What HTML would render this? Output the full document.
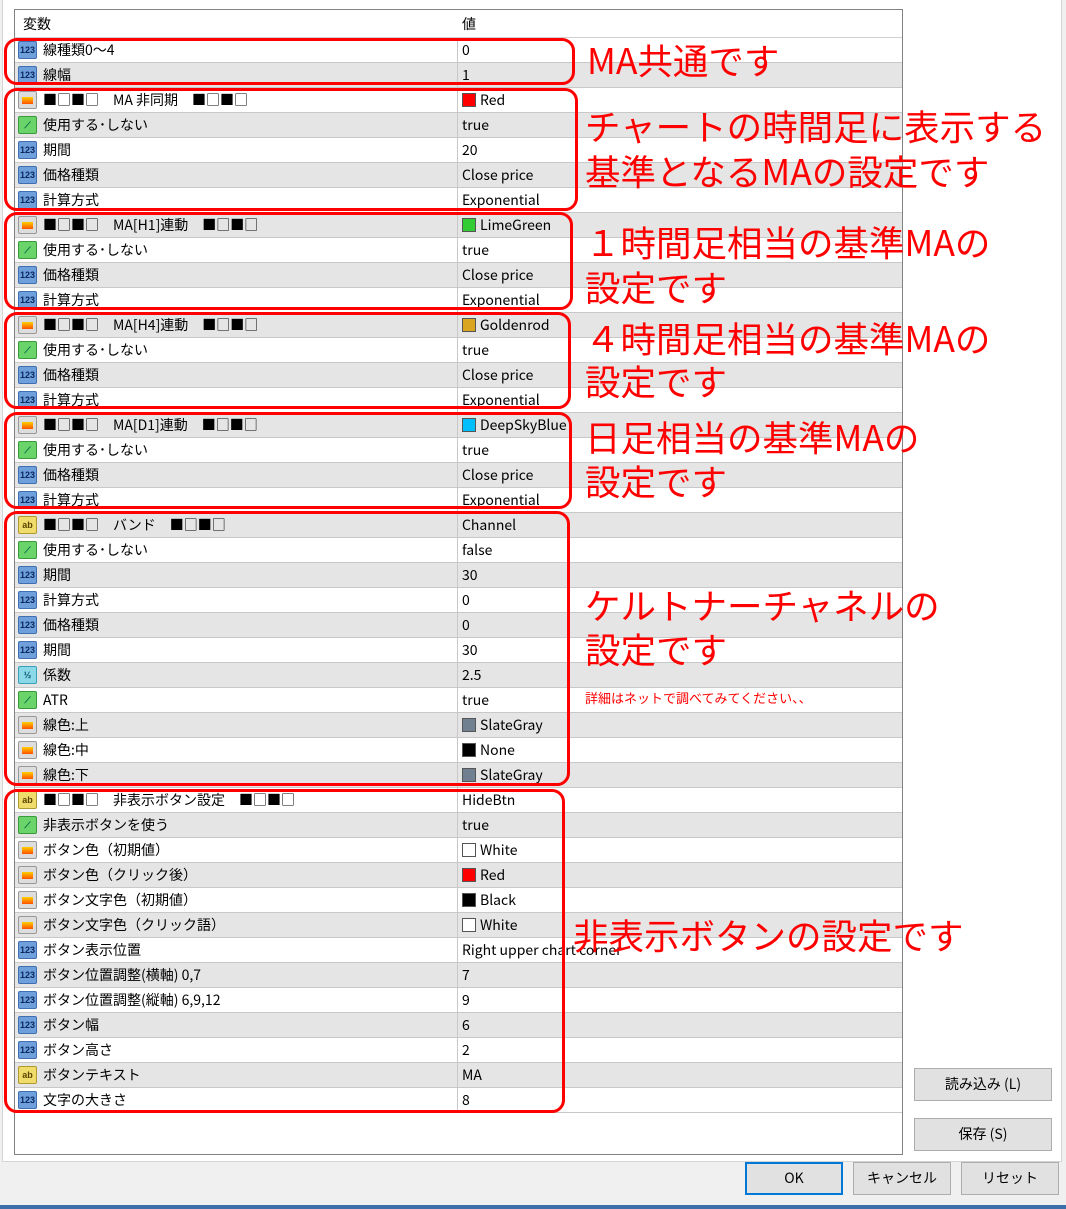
<!DOCTYPE html>
<html><head><meta charset="utf-8"><style>
*{margin:0;padding:0;box-sizing:border-box}
body{width:1066px;height:1209px;background:#f0f0f0;position:relative;overflow:hidden;font-family:"Liberation Sans","Noto Sans CJK JP",sans-serif;font-size:14px;color:#000}
.panel{position:absolute;left:2px;top:0;width:1060px;height:1162px;background:#fff;border:1px solid #d4d4d4;border-top:none}
.tbl{position:absolute;left:14px;top:9px;width:889px;height:1146px;border:1px solid #828282;background:#fff;overflow:hidden}
.hdr{position:absolute;left:0;top:0;width:887px;height:28px;border-bottom:1px solid #d0d0d0}
.hdr span{position:absolute;top:0;line-height:28px;font-family:"Noto Sans CJK JP",sans-serif}
.row{position:absolute;left:0;width:887px;height:25px;border-bottom:1px solid #c8c8c8}
.row.g{background:#e5e5e5}
.row .n{position:absolute;left:28px;top:0;line-height:24px;height:24px;white-space:nowrap;font-family:"Noto Sans CJK JP",sans-serif;font-size:14px}
.row .v{position:absolute;left:447px;top:0;line-height:24px;height:24px;white-space:nowrap;font-family:"Noto Sans CJK JP",sans-serif}
.row .d{position:absolute;left:442px;top:0;width:1px;height:25px;background:#c8c8c8}
.ic{position:absolute;left:3px;top:3px;width:19px;height:18px;border-radius:2px;font-size:9px;font-weight:bold;line-height:16px;text-align:center;font-style:normal}
.i1{background:#6fa0dc;border:1px solid #3f6fb0;color:#0a2a60}
.i2{background:#6ad46a;border:1px solid #3a9a3a;color:#064}
.i3{background:#ddd;border:1px solid #999}
.i3:after{content:"";position:absolute;left:3px;top:5px;width:11px;height:7px;background:linear-gradient(#ffd000,#ff5000)}
.i4{background:#f0dc6a;border:1px solid #b09a30;color:#5a4400}
.i5{background:#8ad8e8;border:1px solid #3aa0b8;color:#06506a}
.sw{display:inline-block;width:14px;height:14px;vertical-align:-2px;margin-right:4px;border:1px solid #555}
.box{position:absolute;border:3px solid #f00;border-radius:13px}
.an{position:absolute;color:#f00;font-family:"Noto Sans CJK JP",sans-serif;font-size:35.5px;line-height:1;white-space:nowrap;font-weight:400}
.btn{position:absolute;background:#e1e1e1;border:1px solid #adadad;text-align:center;font-size:14px;line-height:30px;font-family:"Noto Sans CJK JP",sans-serif}
</style></head><body>
<div class="panel"></div>
<div class="tbl">
<div class="hdr"><span style="left:8px">変数</span><span style="left:447px">値</span></div>
<div class="row" style="top:28px"><i class="ic i1">123</i><span class="n">線種類0～4</span><i class="d"></i><span class="v">0</span></div>
<div class="row g" style="top:53px"><i class="ic i1">123</i><span class="n">線幅</span><i class="d"></i><span class="v">1</span></div>
<div class="row" style="top:78px"><i class="ic i3"></i><span class="n">■□■□　MA 非同期　■□■□</span><i class="d"></i><span class="v"><i class="sw" style="background:#f00"></i>Red</span></div>
<div class="row g" style="top:103px"><i class="ic i2">⟋</i><span class="n">使用する･しない</span><i class="d"></i><span class="v">true</span></div>
<div class="row" style="top:128px"><i class="ic i1">123</i><span class="n">期間</span><i class="d"></i><span class="v">20</span></div>
<div class="row g" style="top:153px"><i class="ic i1">123</i><span class="n">価格種類</span><i class="d"></i><span class="v">Close price</span></div>
<div class="row" style="top:178px"><i class="ic i1">123</i><span class="n">計算方式</span><i class="d"></i><span class="v">Exponential</span></div>
<div class="row g" style="top:203px"><i class="ic i3"></i><span class="n">■□■□　MA[H1]連動　■□■□</span><i class="d"></i><span class="v"><i class="sw" style="background:#32cd32"></i>LimeGreen</span></div>
<div class="row" style="top:228px"><i class="ic i2">⟋</i><span class="n">使用する･しない</span><i class="d"></i><span class="v">true</span></div>
<div class="row g" style="top:253px"><i class="ic i1">123</i><span class="n">価格種類</span><i class="d"></i><span class="v">Close price</span></div>
<div class="row" style="top:278px"><i class="ic i1">123</i><span class="n">計算方式</span><i class="d"></i><span class="v">Exponential</span></div>
<div class="row g" style="top:303px"><i class="ic i3"></i><span class="n">■□■□　MA[H4]連動　■□■□</span><i class="d"></i><span class="v"><i class="sw" style="background:#daa520"></i>Goldenrod</span></div>
<div class="row" style="top:328px"><i class="ic i2">⟋</i><span class="n">使用する･しない</span><i class="d"></i><span class="v">true</span></div>
<div class="row g" style="top:353px"><i class="ic i1">123</i><span class="n">価格種類</span><i class="d"></i><span class="v">Close price</span></div>
<div class="row" style="top:378px"><i class="ic i1">123</i><span class="n">計算方式</span><i class="d"></i><span class="v">Exponential</span></div>
<div class="row g" style="top:403px"><i class="ic i3"></i><span class="n">■□■□　MA[D1]連動　■□■□</span><i class="d"></i><span class="v"><i class="sw" style="background:#00bfff"></i>DeepSkyBlue</span></div>
<div class="row" style="top:428px"><i class="ic i2">⟋</i><span class="n">使用する･しない</span><i class="d"></i><span class="v">true</span></div>
<div class="row g" style="top:453px"><i class="ic i1">123</i><span class="n">価格種類</span><i class="d"></i><span class="v">Close price</span></div>
<div class="row" style="top:478px"><i class="ic i1">123</i><span class="n">計算方式</span><i class="d"></i><span class="v">Exponential</span></div>
<div class="row g" style="top:503px"><i class="ic i4">ab</i><span class="n">■□■□　バンド　■□■□</span><i class="d"></i><span class="v">Channel</span></div>
<div class="row" style="top:528px"><i class="ic i2">⟋</i><span class="n">使用する･しない</span><i class="d"></i><span class="v">false</span></div>
<div class="row g" style="top:553px"><i class="ic i1">123</i><span class="n">期間</span><i class="d"></i><span class="v">30</span></div>
<div class="row" style="top:578px"><i class="ic i1">123</i><span class="n">計算方式</span><i class="d"></i><span class="v">0</span></div>
<div class="row g" style="top:603px"><i class="ic i1">123</i><span class="n">価格種類</span><i class="d"></i><span class="v">0</span></div>
<div class="row" style="top:628px"><i class="ic i1">123</i><span class="n">期間</span><i class="d"></i><span class="v">30</span></div>
<div class="row g" style="top:653px"><i class="ic i5">½</i><span class="n">係数</span><i class="d"></i><span class="v">2.5</span></div>
<div class="row" style="top:678px"><i class="ic i2">⟋</i><span class="n">ATR</span><i class="d"></i><span class="v">true</span></div>
<div class="row g" style="top:703px"><i class="ic i3"></i><span class="n">線色:上</span><i class="d"></i><span class="v"><i class="sw" style="background:#708090"></i>SlateGray</span></div>
<div class="row" style="top:728px"><i class="ic i3"></i><span class="n">線色:中</span><i class="d"></i><span class="v"><i class="sw" style="background:#000"></i>None</span></div>
<div class="row g" style="top:753px"><i class="ic i3"></i><span class="n">線色:下</span><i class="d"></i><span class="v"><i class="sw" style="background:#708090"></i>SlateGray</span></div>
<div class="row" style="top:778px"><i class="ic i4">ab</i><span class="n">■□■□　非表示ボタン設定　■□■□</span><i class="d"></i><span class="v">HideBtn</span></div>
<div class="row g" style="top:803px"><i class="ic i2">⟋</i><span class="n">非表示ボタンを使う</span><i class="d"></i><span class="v">true</span></div>
<div class="row" style="top:828px"><i class="ic i3"></i><span class="n">ボタン色（初期値）</span><i class="d"></i><span class="v"><i class="sw" style="background:#fff"></i>White</span></div>
<div class="row g" style="top:853px"><i class="ic i3"></i><span class="n">ボタン色（クリック後）</span><i class="d"></i><span class="v"><i class="sw" style="background:#f00"></i>Red</span></div>
<div class="row" style="top:878px"><i class="ic i3"></i><span class="n">ボタン文字色（初期値）</span><i class="d"></i><span class="v"><i class="sw" style="background:#000"></i>Black</span></div>
<div class="row g" style="top:903px"><i class="ic i3"></i><span class="n">ボタン文字色（クリック語）</span><i class="d"></i><span class="v"><i class="sw" style="background:#fff"></i>White</span></div>
<div class="row" style="top:928px"><i class="ic i1">123</i><span class="n">ボタン表示位置</span><i class="d"></i><span class="v">Right upper chart corner</span></div>
<div class="row g" style="top:953px"><i class="ic i1">123</i><span class="n">ボタン位置調整(横軸) 0,7</span><i class="d"></i><span class="v">7</span></div>
<div class="row" style="top:978px"><i class="ic i1">123</i><span class="n">ボタン位置調整(縦軸) 6,9,12</span><i class="d"></i><span class="v">9</span></div>
<div class="row g" style="top:1003px"><i class="ic i1">123</i><span class="n">ボタン幅</span><i class="d"></i><span class="v">6</span></div>
<div class="row" style="top:1028px"><i class="ic i1">123</i><span class="n">ボタン高さ</span><i class="d"></i><span class="v">2</span></div>
<div class="row g" style="top:1053px"><i class="ic i4">ab</i><span class="n">ボタンテキスト</span><i class="d"></i><span class="v">MA</span></div>
<div class="row" style="top:1078px"><i class="ic i1">123</i><span class="n">文字の大きさ</span><i class="d"></i><span class="v">8</span></div>
</div>

<div class="box" style="left:4px;top:38px;width:571px;height:47px"></div>
<div class="box" style="left:4px;top:88px;width:574px;height:123px"></div>
<div class="box" style="left:4px;top:212px;width:569px;height:98px"></div>
<div class="box" style="left:4px;top:312px;width:567px;height:97px"></div>
<div class="box" style="left:4px;top:412px;width:568px;height:97px"></div>
<div class="box" style="left:4px;top:511px;width:566px;height:275px"></div>
<div class="box" style="left:4px;top:789px;width:561px;height:324px"></div>

<div class="an" style="left:587px;top:42px">MA共通です</div>
<div class="an" style="left:585px;top:108px">チャートの時間足に表示する</div>
<div class="an" style="left:585px;top:153px">基準となるMAの設定です</div>
<div class="an" style="left:585px;top:224px">１時間足相当の基準MAの</div>
<div class="an" style="left:585px;top:269px">設定です</div>
<div class="an" style="left:585px;top:320px">４時間足相当の基準MAの</div>
<div class="an" style="left:585px;top:363px">設定です</div>
<div class="an" style="left:585px;top:419px">日足相当の基準MAの</div>
<div class="an" style="left:585px;top:463px">設定です</div>
<div class="an" style="left:585px;top:587px">ケルトナーチャネルの</div>
<div class="an" style="left:585px;top:631px">設定です</div>
<div class="an" style="left:585px;top:691px;font-size:13px">詳細はネットで調べてみてください、、</div>
<div class="an" style="left:573px;top:917px">非表示ボタンの設定です</div>

<div class="btn" style="left:914px;top:1068px;width:138px;height:33px">読み込み (L)</div>
<div class="btn" style="left:914px;top:1118px;width:138px;height:33px">保存 (S)</div>
<div class="btn" style="left:745px;top:1162px;width:98px;height:33px;border:2px solid #0078d7;line-height:29px">OK</div>
<div class="btn" style="left:853px;top:1162px;width:98px;height:33px">キャンセル</div>
<div class="btn" style="left:961px;top:1162px;width:98px;height:33px">リセット</div>
<div style="position:absolute;left:0;top:1205px;width:1066px;height:4px;background:#3c6ea8"></div>
</body></html>
